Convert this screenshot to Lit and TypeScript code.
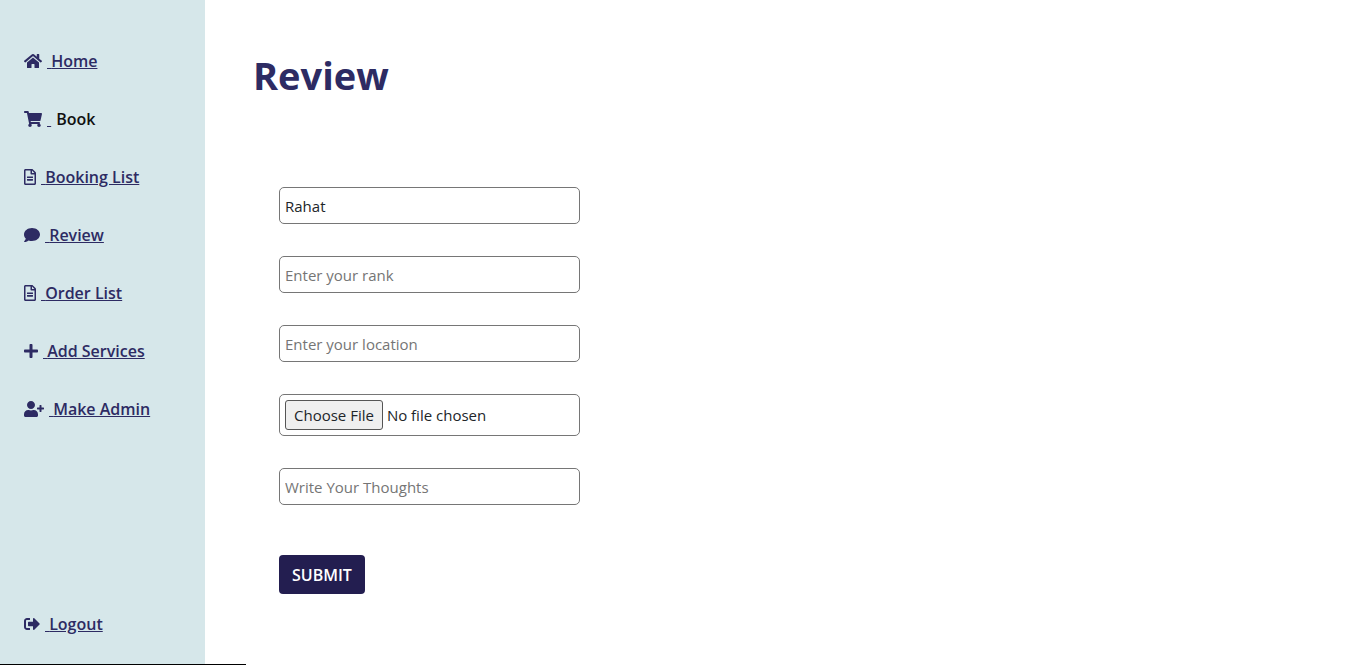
import { LitElement, html, css, nothing } from "lit";
import { customElement } from "lit/decorators.js";

interface Icon {
  width: number;
  path: string;
}

const icons: Record<string, Icon> = {
  home: {
    width: 576,
    path: "M280.37 148.26L96 300.11V464a16 16 0 0 0 16 16l112.06-.29a16 16 0 0 0 15.92-16V368a16 16 0 0 1 16-16h64a16 16 0 0 1 16 16v95.64a16 16 0 0 0 16 16.05L464 480a16 16 0 0 0 16-16V300L295.67 148.26a12.19 12.19 0 0 0-15.3 0zM571.6 251.47L488 182.56V44.05a12 12 0 0 0-12-12h-56a12 12 0 0 0-12 12v72.61L318.47 43a48 48 0 0 0-61 0L4.34 251.47a12 12 0 0 0-1.6 16.9l25.5 31A12 12 0 0 0 45.15 301l235.22-193.74a12.19 12.19 0 0 1 15.3 0L530.9 301a12 12 0 0 0 16.9-1.6l25.5-31a12 12 0 0 0-1.7-16.93z",
  },
  cart: {
    width: 576,
    path: "M528.12 301.319l47.273-208C578.806 78.301 567.391 64 551.99 64H159.208l-9.166-44.81C147.758 8.021 137.93 0 126.529 0H24C10.745 0 0 10.745 0 24v16c0 13.255 10.745 24 24 24h69.883l70.248 343.435C147.325 417.1 136 435.222 136 456c0 30.928 25.072 56 56 56s56-25.072 56-56c0-15.674-6.447-29.835-16.824-40h209.647C430.447 426.165 424 440.326 424 456c0 30.928 25.072 56 56 56s56-25.072 56-56c0-22.172-12.888-41.332-31.579-50.405l5.517-24.276c3.413-15.018-8.002-29.319-23.403-29.319H218.117l-6.545-32h293.145c11.206 0 20.92-7.754 23.403-18.681z",
  },
  file: {
    width: 384,
    path: "M288 248v28c0 6.6-5.4 12-12 12H108c-6.6 0-12-5.4-12-12v-28c0-6.6 5.4-12 12-12h168c6.6 0 12 5.4 12 12zm-12 72H108c-6.6 0-12 5.4-12 12v28c0 6.6 5.4 12 12 12h168c6.6 0 12-5.4 12-12v-28c0-6.6-5.4-12-12-12zm108-188.1V464c0 26.5-21.5 48-48 48H48c-26.5 0-48-21.5-48-48V48C0 21.5 21.5 0 48 0h204.1C264.8 0 277 5.1 286 14.1L369.9 98c9 8.9 14.1 21.2 14.1 33.9zm-128-80V128h76.1L256 51.9zM336 464V176H232c-13.3 0-24-10.7-24-24V48H48v416h288z",
  },
  comment: {
    width: 512,
    path: "M256 32C114.6 32 0 125.1 0 240c0 49.6 21.4 95 57 130.7C44.5 421.1 2.7 466 2.2 466.5c-2.2 2.3-2.8 5.7-1.5 8.7S4.8 480 8 480c66.3 0 116-31.8 140.6-51.4 32.7 12.3 69 19.4 107.4 19.4 141.4 0 256-93.1 256-208S397.4 32 256 32z",
  },
  plus: {
    width: 448,
    path: "M416 208H272V64c0-17.67-14.33-32-32-32h-32c-17.67 0-32 14.33-32 32v144H32c-17.67 0-32 14.33-32 32v32c0 17.67 14.33 32 32 32h144v144c0 17.67 14.33 32 32 32h32c17.67 0 32-14.33 32-32V304h144c17.67 0 32-14.33 32-32v-32c0-17.67-14.33-32-32-32z",
  },
  userPlus: {
    width: 640,
    path: "M624 208h-64v-64c0-8.8-7.2-16-16-16h-32c-8.8 0-16 7.2-16 16v64h-64c-8.8 0-16 7.2-16 16v32c0 8.8 7.2 16 16 16h64v64c0 8.8 7.2 16 16 16h32c8.8 0 16-7.2 16-16v-64h64c8.8 0 16-7.2 16-16v-32c0-8.8-7.2-16-16-16zm-400 48c70.7 0 128-57.3 128-128S294.7 0 224 0 96 57.3 96 128s57.3 128 128 128zm89.6 32h-16.7c-22.2 10.2-46.9 16-72.9 16s-50.6-5.8-72.9-16h-16.7C60.2 288 0 348.2 0 422.4V464c0 26.5 21.5 48 48 48h352c26.5 0 48-21.5 48-48v-41.6c0-74.2-60.2-134.4-134.4-134.4z",
  },
  signOut: {
    width: 512,
    path: "M497 273L329 441c-15 15-41 4.5-41-17v-96H152c-13.3 0-24-10.7-24-24v-96c0-13.3 10.7-24 24-24h136V88c0-21.4 25.9-32 41-17l168 168c9.3 9.4 9.3 24.6 0 34zM192 436v-40c0-6.6-5.4-12-12-12H96c-17.7 0-32-14.3-32-32V160c0-17.7 14.3-32 32-32h84c6.6 0 12-5.4 12-12V76c0-6.6-5.4-12-12-12H96c-53 0-96 43-96 96v192c0 53 43 96 96 96h84c6.6 0 12-5.4 12-12z",
  },
};

interface NavItem {
  icon: string;
  label: string;
  plain?: boolean;
}

const navItems: NavItem[] = [
  { icon: "home", label: "Home" },
  { icon: "cart", label: "Book", plain: true },
  { icon: "file", label: "Booking List" },
  { icon: "comment", label: "Review" },
  { icon: "file", label: "Order List" },
  { icon: "plus", label: "Add Services" },
  { icon: "userPlus", label: "Make Admin" },
];

@customElement("app-root")
export class AppRoot extends LitElement {
  static styles = css`
    :host {
      display: block;
      font-family: "Segoe UI", "Open Sans", "Noto Sans", sans-serif;
      font-size: 15px;
      line-height: 24px;
      color: #212529;
      background: #fff;
    }
    *,
    ::before,
    ::after {
      box-sizing: border-box;
    }
    .layout {
      display: flex;
      min-height: 100vh;
    }
    .sidebar {
      flex: none;
      width: 205px;
      padding: 49px 24px 29px;
      display: flex;
      flex-direction: column;
      justify-content: space-between;
      background: #d6e7ea;
    }
    .menu {
      list-style: none;
      margin: 0;
      padding: 0;
      display: flex;
      flex-direction: column;
      gap: 34px;
    }
    .link {
      display: flex;
      align-items: center;
      gap: 5px;
      color: #2d2b63;
      font-size: 16px;
      font-weight: 600;
      text-decoration: none;
    }
    .icon {
      flex: none;
      height: 16px;
      fill: currentColor;
    }
    .underlined {
      text-decoration: underline;
      white-space: pre;
    }
    .plain {
      color: #111;
    }
    .content {
      flex: 1;
      padding: 47px 48px;
    }
    .title {
      margin: 0;
      font-size: 38px;
      line-height: 56px;
      font-weight: 700;
      color: #2d2b63;
    }
    .form {
      display: flex;
      flex-direction: column;
      align-items: flex-start;
      gap: 32px;
      padding: 84px 26px 0;
    }
    .field {
      width: 301px;
      max-width: 100%;
      height: 37px;
      padding: 5px;
      border: 1px solid #767676;
      border-radius: 5px;
      background: #fff;
      font: inherit;
      color: #212529;
    }
    .field::placeholder {
      color: #757575;
      opacity: 1;
    }
    .file {
      height: 42px;
    }
    .file::file-selector-button {
      height: 30px;
      margin: 0 4px 0 0;
      padding: 0 8px;
      border: 1px solid #555;
      border-radius: 3px;
      background: #efefef;
      font: inherit;
      color: #212529;
    }
    .submit {
      margin-top: 18px;
      height: 39px;
      padding: 0 13px;
      border: 0;
      border-radius: 4px;
      background: #231e50;
      color: #fff;
      font: inherit;
      font-size: 16px;
      font-weight: 600;
    }
    .status {
      position: fixed;
      left: 0;
      bottom: 0;
      width: 246px;
      height: 1px;
      background: #000;
    }
  `;

  private renderLink(item: NavItem) {
    const icon = icons[item.icon];
    return html`<a class="link" href="#"
      ><svg class="icon" viewBox="0 0 ${icon.width} 512" aria-hidden="true"><path d=${icon.path}></path></svg
      ><span class="underlined">${"\u00a0"}${item.plain ? nothing : item.label}</span>${item.plain
        ? html`<span class="plain">${item.label}</span>`
        : nothing}</a
    >`;
  }

  render() {
    return html`
      <div class="layout">
        <nav class="sidebar">
          <ul class="menu">
            ${navItems.map((item) => html`<li>${this.renderLink(item)}</li>`)}
          </ul>
          ${this.renderLink({ icon: "signOut", label: "Logout" })}
        </nav>
        <main class="content">
          <h1 class="title">Review</h1>
          <form class="form" @submit=${(e: Event) => e.preventDefault()}>
            <input class="field" type="text" name="name" aria-label="Name" .value=${"Rahat"} />
            <input class="field" type="text" name="rank" aria-label="Rank" placeholder="Enter your rank" />
            <input class="field" type="text" name="location" aria-label="Location" placeholder="Enter your location" />
            <input class="field file" type="file" name="photo" aria-label="Photo" />
            <input class="field" type="text" name="thoughts" aria-label="Thoughts" placeholder="Write Your Thoughts" />
            <button class="submit" type="submit">SUBMIT</button>
          </form>
        </main>
      </div>
      <div class="status"></div>
    `;
  }
}
